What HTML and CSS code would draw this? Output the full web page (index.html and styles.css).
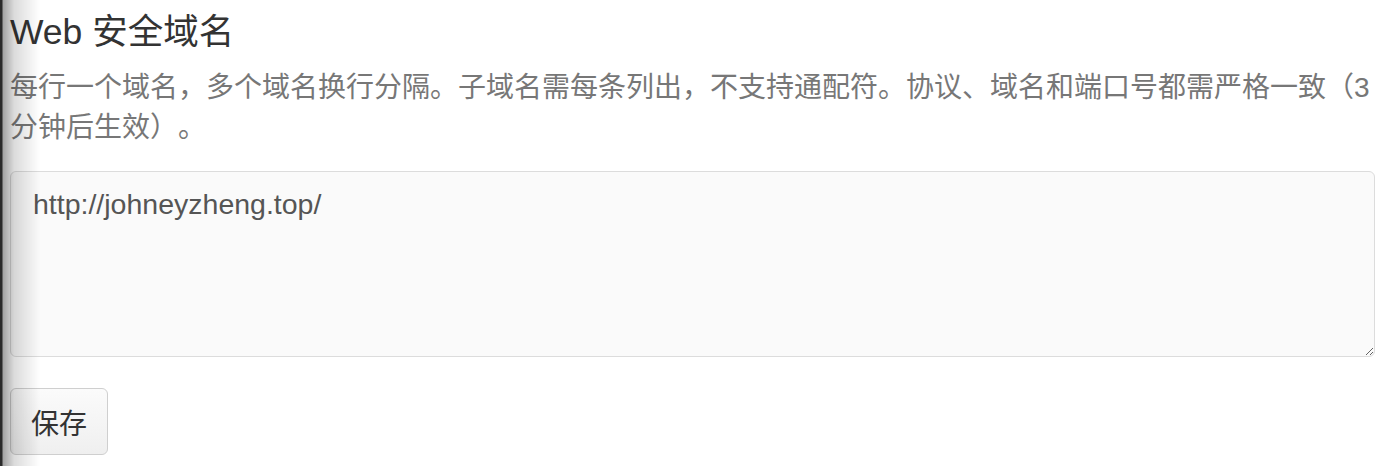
FILE: index.html
```html
<!DOCTYPE html>
<html lang="zh-CN">
<head>
    <meta charset="UTF-8">
    <meta name="viewport" content="width=device-width, initial-scale=1.0">
    <title>Web 安全域名</title>
    <link rel="stylesheet" href="styles.css">
</head>
<body>
    <div class="panel">
        <h1>Web 安全域名</h1>
        <p class="hint">每行一个域名，多个域名换行分隔。子域名需每条列出，不支持通配符。协议、域名和端口号都需严格一致（3分钟后生效）。</p>
        <textarea class="domains">http://johneyzheng.top/</textarea>
        <div class="actions">
            <button class="save">保存</button>
        </div>
    </div>
</body>
</html>
```

FILE: styles.css
```css
body {
    margin: 0;
    font-family: "Liberation Sans", "Noto Sans CJK SC", sans-serif;
    background-color: #ffffff;
    color: #333;
    text-spacing-trim: space-all;
}

/* edge shadow from the neighbouring pane */
body::before {
    content: "";
    position: fixed;
    left: 0;
    top: 0;
    bottom: 0;
    width: 40px;
    background: linear-gradient(to right, #2a2a2a 0, #2a2a2a 2px, rgba(0, 0, 0, 0.36) 3px, rgba(0, 0, 0, 0.14) 14px, rgba(0, 0, 0, 0) 40px);
    pointer-events: none;
}

.panel {
    padding: 12px 23px 0 10px;
}

h1 {
    margin: 0;
    font-size: 35.5px;
    font-weight: normal;
    line-height: 40px;
    color: #333;
}

.hint {
    margin: 16px 0 23px;
    font-size: 28px;
    line-height: 40px;
    color: #777;
}

.domains {
    display: block;
    box-sizing: border-box;
    width: 100%;
    height: 186px;
    padding: 12px 22px;
    font-family: "Liberation Sans", "Noto Sans CJK SC", sans-serif;
    font-size: 28.5px;
    line-height: 40px;
    color: #555;
    background-color: #fafafa;
    border: 1px solid #dcdcdc;
    border-radius: 6px;
}

.actions {
    margin-top: 31px;
}

.save {
    box-sizing: border-box;
    height: 67px;
    padding: 0 20px;
    font-family: "Liberation Sans", "Noto Sans CJK SC", sans-serif;
    font-size: 28px;
    color: #333;
    background: linear-gradient(#fbfbfb, #efefef);
    border: 1px solid #cfcfcf;
    border-radius: 6px;
    cursor: pointer;
}
```
